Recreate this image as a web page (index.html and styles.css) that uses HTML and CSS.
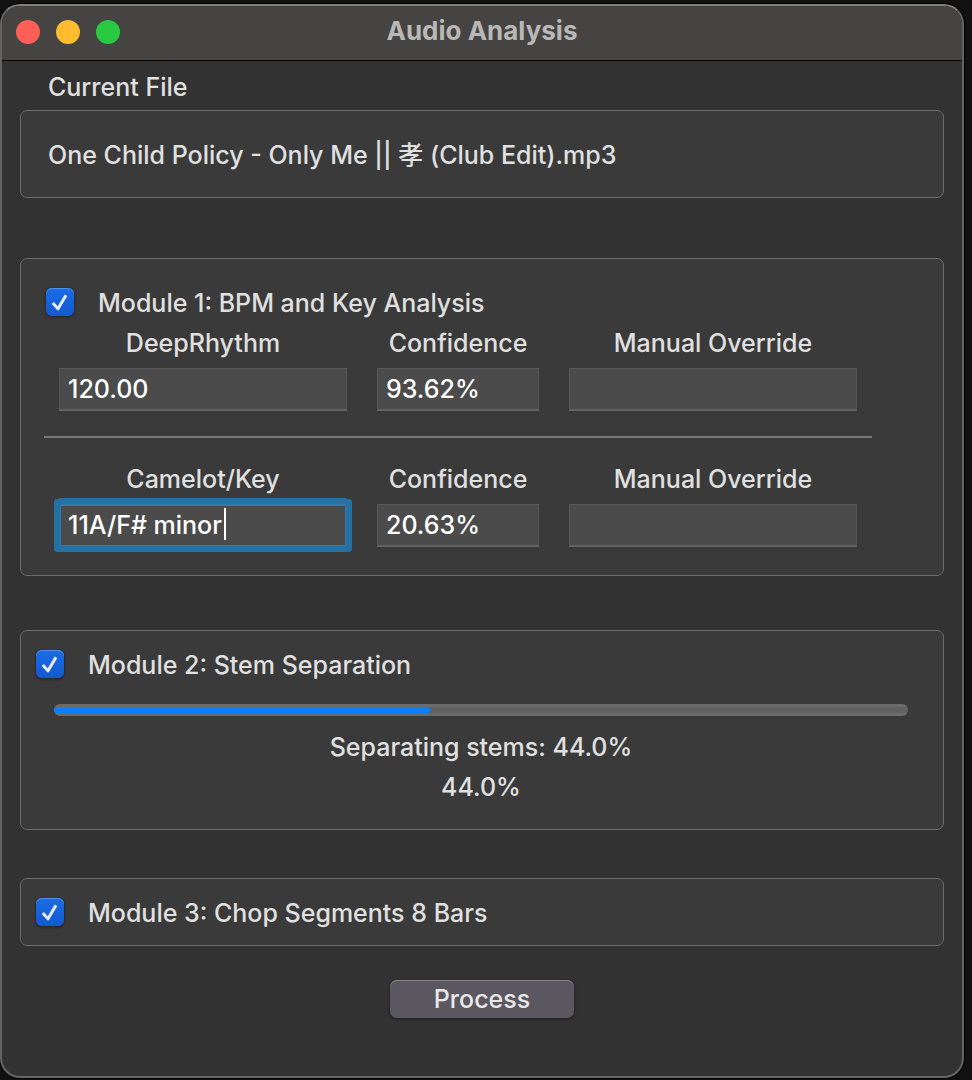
FILE: index.html
```html
<!DOCTYPE html>
<html lang="en">
<head>
<meta charset="utf-8">
<title>Audio Analysis</title>
<link rel="stylesheet" href="styles.css">
</head>
<body>
<main class="window">
  <header class="titlebar">
    <div class="lights">
      <button class="light light-close" type="button" aria-label="Close"></button>
      <button class="light light-minimize" type="button" aria-label="Minimize"></button>
      <button class="light light-zoom" type="button" aria-label="Zoom"></button>
    </div>
    <h1 class="title">Audio Analysis</h1>
  </header>

  <div class="content">
    <h2 class="caption">Current File</h2>
    <section class="group file">
      <p class="filename">One Child Policy - Only Me || 孝 (Club Edit).mp3</p>
    </section>

    <section class="group bpm">
      <label class="module">
        <span class="tick">
          <input class="box" type="checkbox" checked>
          <svg class="mark" viewBox="0 0 28 28" aria-hidden="true"><path d="M6.8 15 12 20.8 20 7.2"/></svg>
        </span>
        <span class="name">Module 1: BPM and Key Analysis</span>
      </label>
      <div class="fields">
        <div class="field">
          <label for="bpm">DeepRhythm</label>
          <input id="bpm" class="entry" type="text" value="120.00">
        </div>
        <div class="field">
          <label for="bpm-confidence">Confidence</label>
          <input id="bpm-confidence" class="entry" type="text" value="93.62%">
        </div>
        <div class="field">
          <label for="bpm-override">Manual Override</label>
          <input id="bpm-override" class="entry" type="text">
        </div>
      </div>
      <hr class="rule">
      <div class="fields">
        <div class="field">
          <label for="key">Camelot/Key</label>
          <div class="focus">
            <input id="key" class="entry entry-focus" type="text" value="11A/F# minor">
            <span class="caret"></span>
          </div>
        </div>
        <div class="field">
          <label for="key-confidence">Confidence</label>
          <input id="key-confidence" class="entry" type="text" value="20.63%">
        </div>
        <div class="field">
          <label for="key-override">Manual Override</label>
          <input id="key-override" class="entry" type="text">
        </div>
      </div>
    </section>

    <section class="group stems">
      <label class="module">
        <span class="tick">
          <input class="box" type="checkbox" checked>
          <svg class="mark" viewBox="0 0 28 28" aria-hidden="true"><path d="M6.8 15 12 20.8 20 7.2"/></svg>
        </span>
        <span class="name">Module 2: Stem Separation</span>
      </label>
      <progress class="progress" value="44" max="100" aria-label="Stem separation"></progress>
      <p class="status">Separating stems: 44.0%</p>
      <p class="status">44.0%</p>
    </section>

    <section class="group chop">
      <label class="module">
        <span class="tick">
          <input class="box" type="checkbox" checked>
          <svg class="mark" viewBox="0 0 28 28" aria-hidden="true"><path d="M6.8 15 12 20.8 20 7.2"/></svg>
        </span>
        <span class="name">Module 3: Chop Segments 8 Bars</span>
      </label>
    </section>

    <button class="process" type="button">Process</button>
  </div>
</main>
</body>
</html>
```

FILE: styles.css
```css
* {
  box-sizing: border-box;
}

html {
  background: #111;
}

body {
  display: flex;
  min-height: 100vh;
  margin: 0;
  padding: 4px 8px 2px 0;
  font: 500 25px/32px Inter, "Noto Sans CJK SC", sans-serif;
  color: #e0e0e0;
}

h1, h2, p {
  margin: 0;
  font-size: inherit;
  font-weight: inherit;
}

.window {
  flex: 1;
  display: flex;
  flex-direction: column;
  overflow: hidden;
  border: 2px solid #656565;
  border-top-color: #7d7d7b;
  border-radius: 20px;
  background: #323232;
  box-shadow: 0 0 0 1px #000;
}

.titlebar {
  display: grid;
  grid-template-columns: 1fr auto 1fr;
  align-items: center;
  height: 55px;
  padding: 0 14px 2px;
  border-bottom: 1px solid #000;
  background: #454442;
}

.lights {
  display: flex;
  gap: 16px;
}

.light {
  width: 24px;
  height: 24px;
  padding: 0;
  border: 0;
  border-radius: 50%;
}

.light-close { background: #ff5f57; }
.light-minimize { background: #febc2e; }
.light-zoom { background: #28c840; }

.title {
  padding-bottom: 2px;
  font-size: 26px;
  font-weight: 700;
  color: #b9b8b7;
}

.content {
  display: flex;
  flex-direction: column;
  padding: 10px 18px 24px;
}

.caption {
  margin: 0 28px 7px;
}

.group {
  border: 1px solid #6b6b6b;
  border-radius: 7px;
  background: #3a3a3a;
}

.file {
  padding: 28px 27px 26px;
}

.bpm {
  margin-top: 60px;
  padding: 29px 71px 28px 23px;
}

.stems {
  display: flex;
  flex-direction: column;
  margin-top: 54px;
  padding: 19px 35px 26px 33px;
}

.chop {
  margin-top: 48px;
  padding: 19px 15px;
}

.module {
  display: flex;
  align-items: center;
  gap: 24px;
  height: 28px;
}

.bpm .module {
  margin: 0 2px 11px;
}

.stems .module {
  margin: 0 0 26px -18px;
}

.name {
  padding-top: 2px;
}

.tick {
  display: grid;
}

.box,
.mark {
  grid-area: 1 / 1;
  width: 28px;
  height: 28px;
}

.box {
  appearance: none;
  margin: 0;
  border-radius: 6px;
  background: linear-gradient(#1b6ce6, #1259cf);
  box-shadow: inset 0 1px 0 #4f8fee, 0 1px 2px 1px #2a2a2a;
}

.mark {
  fill: none;
  stroke: #e6ecfa;
  stroke-width: 3;
  stroke-linejoin: round;
  pointer-events: none;
}

.fields {
  display: grid;
  grid-template-columns: 16fr 9fr 16fr;
  gap: 30px;
  padding: 0 15px;
}

.field {
  display: flex;
  flex-direction: column;
  gap: 9px;
  min-width: 0;
  text-align: center;
}

.entry {
  width: 100%;
  height: 43px;
  padding: 0 8px 1px;
  border: 1px solid #565656;
  border-bottom: 2px solid #636363;
  border-radius: 0;
  outline: 0;
  background: #4b4b4b;
  font: inherit;
  color: #fff;
}

.focus {
  position: relative;
  display: flex;
}

.entry-focus {
  padding: 0 7px 1px;
  border: 2px solid #2f7bb0;
  border-radius: 1px;
  box-shadow: 0 0 0 1px #2571a1, 0 0 0 5px #2571a1;
}

.focus::before {
  content: "";
  position: absolute;
  inset: -6px -5px -5px;
  border: 6px solid #2571a1;
  border-radius: 8px;
  pointer-events: none;
}

.caret {
  position: absolute;
  top: 4px;
  left: 165px;
  width: 2px;
  height: 32px;
  background: #fff;
}

.rule {
  height: 2px;
  margin: 25px 0;
  border: 0;
  background: #757675;
}

.progress {
  appearance: none;
  display: block;
  width: 100%;
  height: 12px;
  margin-bottom: 15px;
  border: 0;
  background: none;
}

.progress::-webkit-progress-bar {
  box-sizing: border-box;
  height: 12px;
  padding: 3px 0;
  border-radius: 6px;
  background: linear-gradient(#6b6b6b 3px, #626262 3px 9px, #6b6b6b 9px);
}

.progress::-webkit-progress-value {
  border-radius: 3px;
  background: #0a80ff;
}

.status {
  text-align: center;
}

.status + .status {
  margin-top: 8px;
}

.process {
  align-self: center;
  width: 184px;
  height: 38px;
  margin-top: 34px;
  padding: 0;
  border: 0;
  border-radius: 7px;
  background: #5b5760;
  box-shadow: inset 0 1px 0 #85828a, 0 1px 2px 1px #262626;
  font: inherit;
  color: #e8e8e8;
}
```
